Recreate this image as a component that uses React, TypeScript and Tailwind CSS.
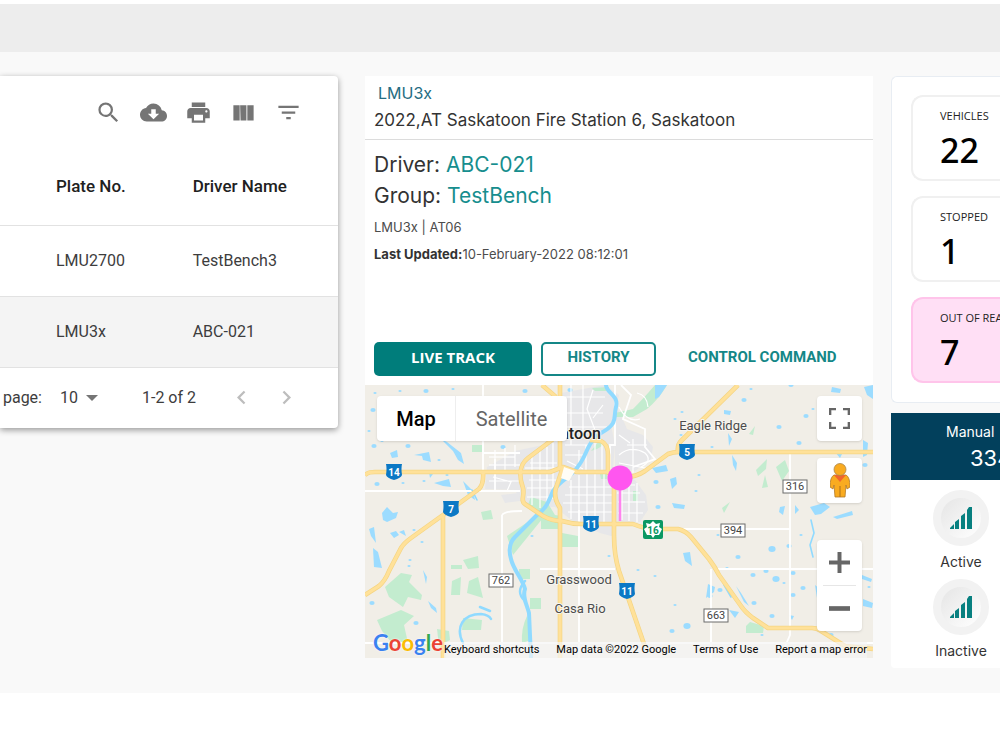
import React from "react";

const vehicles = [
  { plate: "LMU2700", driver: "TestBench3" },
  { plate: "LMU3x", driver: "ABC-021" }
];

const stats = [
  { label: "VEHICLES", value: "22", box: "border-[#f0f0f0] bg-white" },
  { label: "STOPPED", value: "1", box: "border-[#f0f0f0] bg-white" },
  { label: "OUT OF REACH", value: "7", box: "border-[#ffc4ea] bg-[#ffdff5]" }
];

const tools = [
  { name: "Search", d: "M15.5 14h-.79l-.28-.27A6.471 6.471 0 0 0 16 9.5 6.5 6.5 0 1 0 9.5 16c1.61 0 3.09-.59 4.23-1.57l.27.28v.79l5 4.99L20.49 19l-4.99-5zm-6 0C7.01 14 5 11.99 5 9.5S7.01 5 9.5 5 14 7.01 14 9.5 11.99 14 9.5 14z" },
  { name: "Download CSV", d: "M19.35 10.04C18.67 6.59 15.64 4 12 4 9.11 4 6.6 5.64 5.35 8.04 2.34 8.36 0 10.91 0 14c0 3.31 2.69 6 6 6h13c2.76 0 5-2.24 5-5 0-2.64-2.05-4.78-4.65-4.96zM17 13l-5 5-5-5h3V9h4v4h3z" },
  { name: "Print", d: "M19 8H5c-1.66 0-3 1.34-3 3v6h4v4h12v-4h4v-6c0-1.66-1.34-3-3-3zm-3 11H8v-5h8v5zm3-7c-.55 0-1-.45-1-1s.45-1 1-1 1 .45 1 1-.45 1-1 1zm-1-9H6v4h12V3z" },
  { name: "View Columns", d: "M9 5.5h5.6v13.5H9.4zM3 5.5h5.6v13.5H3zM15.4 5.5v13.5H21V5.5z" },
  { name: "Filter Table", d: "M10 18h4v-2h-4v2zM3 6v2h18V6H3zm3 7h12v-2H6v2z" }
];

const highways = [
  "M0 90C4 87 6 87 10 87H155L185 87L198 82L212 87H242C252 94 268 94 280 86L303 69Q308 67 314 67H508",
  "M373 0L316 56Q312 60 313 67",
  "M0 210L14 201Q20 196 24 186L36 163Q39 158 46 153L78 130L114 104Q119 99 118 87",
  "M78 130V273",
  "M177 0L191 12",
  "M195 0V82",
  "M191 52L163 73C154 80 154 92 158 103C160 110 155 116 160 119L178 131Q187 136 197 136Q207 139 216 139H268Q280 144 290 144H313Q321 146 326 152L344 174Q350 182 354 190L376 221Q380 227 388 233L403 243H447Q452 243 456 246L480 261L508 264",
  "M198 82L192 100Q187 111 195 123V273",
  "M225 55L236 56Q243 59 243 70V87",
  "M249 93V150Q249 170 254 186L280 262"
];

const minorRoads = [
  "M0 106H155", "M118 0V87", "M130 74V105", "M137 130Q140 126 157 126", "M137 130V273", "M175 184H250",
  "M214 125V273", "M290 144H425", "M425 67V250L415 273", "M350 184H508", "M346 184V273", "M0 258H508", "M118 68H155",
  "M250 0V60H245V90", "M256 0L266 10L258 34L280 44V62L290 74L268 82"
];

const streets = [
  "M124 72H150", "M124 80H155", "M130 65V85M140 63V85M150 60V82", "M124 96H155M128 92L146 97L142 106",
  "M160 83H195M165 78H192M164 95H195M162 103H190M162 112H186M167 70V120M175 66V123M182 62V122M188 58V114",
  "M200 12H240M200 28H238M200 42H242M200 60H225M206 0V60M218 0V52M228 5L222 24L230 45M238 20L228 33",
  "M200 70H220M202 76L218 84M214 65V84M221 60V85M230 58V87M237 59V87",
  "M204 102H247M200 110H247M198 118H247M203 127H247M206 95V134M214 90V136M222 88V137M230 88V138M239 88V138",
  "M252 100H270M252 108H275M253 117H280M253 128H278M257 94V135M264 95V136M272 98V137",
  "M254 70Q266 60 280 68Q288 76 276 82M262 60H282M254 78L285 84M268 54V88",
  "M254 22Q262 38 275 34M272 8Q282 10 283 22M254 50L265 58"
];

const urban = [
  "M150 66L178 60L190 45L196 8L240 0L254 10L246 40L250 60L248 84L270 95L281 110L283 125L275 137L210 138L190 122L158 121L150 105L120 104L122 82L140 72Z",
  "M250 84V20L256 30L262 44L278 50L288 62L286 74L270 86Z",
  "M136 110L154 108L155 116L140 118Z", "M216 140H250V152L235 148Z"
];

const parks = [
  "M250 28L268 24Q278 14 290 0L302 0Q294 14 282 24L268 32H250Z",
  "M107 60H117V67H107Z", "M226 66L234 56L242 58L232 64Z", "M166 112L182 117L190 130L197 131V144H176V128L162 122Z",
  "M142 151L176 128L178 133L148 170Z", "M197 148L213 151V162H197Z", "M116 127L126 125L128 134L118 135Z",
  "M154 184H165V194H154Z", "M165 213H176V224H165Z", "M20 202L36 188L47 190L44 197L57 210L56 215L43 212L38 222L24 212Z",
  "M12 235L36 225L49 231L39 240L43 258H27L17 246Z", "M86 180H97V184H86ZM87 196L96 192L95 210H86Z", "M98 175L113 171L114 183L103 184Z",
  "M104 196L113 192L118 213L102 208Z", "M98 233L117 235L116 245H97Z", "M72 244L84 246L85 255L74 261Z",
  "M157 258Q156 243 162 231L166 255Z", "M391 85L402 74L401 84L393 91ZM411 82L420 75L424 86L417 96ZM397 103L400 90L403 102Z",
  "M381 241L385 237L399 241L398 248H381Z", "M384 49L390 41L388 50ZM357 123L365 117L359 128Z",
  "M227 3L244 2L244 6H230ZM235 89H242V94H236ZM268 106H273V116H268Z"
];

const lakes = [
  "M25 68L32 65L33 72L27 73ZM76 54L82 57L96 68L99 79L93 75L88 66Z", "M49 70L64 67L66 77L58 75L57 71Z",
  "M17 128L22 122L28 128L33 127L31 133L22 137L18 135Z", "M4 144L9 142L11 158L6 151Z", "M8 163L13 167L17 183L9 182Z",
  "M25 148L31 146L34 150L29 153ZM34 147L39 145L41 151Z", "M58 185L62 192L61 199ZM63 216L71 223L72 228L66 223Z",
  "M98 96L108 106L110 115L103 110Z", "M69 98L84 94L86 102L78 101ZM64 87L68 89L65 93Z", "M305 94L311 92L312 99L307 104Z",
  "M287 83L301 80L303 86L291 88Z", "M367 70L372 78L371 86L368 80Z", "M359 25L366 26L365 30L359 29ZM363 48L367 54L364 61Z",
  "M307 118L320 120L319 124L309 123Z", "M318 168L325 167L327 181L320 176ZM343 199L350 202L349 207L341 213Z",
  "M415 122L420 121L418 130L414 127ZM430 120L434 125L430 129Z", "M445 122L459 118L465 122L456 129L450 130Z",
  "M468 132L487 126L488 130L472 134Z", "M497 190L507 194L506 197L497 194ZM498 214L508 218L507 223L498 221Z", "M364 225L374 227L370 233Z",
  "M424 230L429 231L427 235ZM467 2L476 4L475 8L466 7Z", "M499 2L508 0V14L502 10ZM498 55L503 58L502 70L498 72Z",
  "M470 67L477 69L475 73ZM450 200L455 204L452 213Z", "M371 201L376 208L384 221L379 217Z", "M290 0H302L294 12L290 14Z"
];

// small ponds: x, y, radius
const ponds = [
  [10, 8, 1], [22, 18, 2], [35, 6, 1], [44, 12, 1], [61, 6, 2], [75, 14, 1], [88, 4, 1], [160, 6, 2], [205, 5, 2],
  [8, 25, 2], [4, 46, 1], [9, 61, 2], [17, 56, 1], [43, 61, 2], [52, 54, 1], [74, 75, 1], [82, 90, 1], [12, 99, 2],
  [24, 106, 1], [38, 98, 1], [59, 96, 1], [57, 157, 1], [44, 181, 1], [45, 175, 1], [49, 145, 1], [7, 218, 2], [51, 238, 2],
  [138, 62, 2], [291, 97, 2], [310, 34, 1], [317, 27, 1], [379, 15, 2], [386, 4, 1], [414, 42, 2], [434, 58, 2],
  [441, 31, 2], [448, 24, 1], [426, 0, 2], [316, 50, 1], [347, 62, 1], [331, 106, 1], [334, 90, 1], [353, 150, 1],
  [407, 164, 3], [424, 161, 2], [373, 172, 2], [388, 190, 2], [401, 186, 2], [411, 194, 3], [419, 198, 1], [428, 188, 2],
  [438, 203, 2], [428, 210, 2], [290, 191, 1], [293, 122, 2], [273, 185, 1], [310, 220, 1], [322, 241, 3], [307, 246, 2],
  [407, 231, 2], [389, 218, 2], [466, 250, 2], [490, 206, 2], [504, 202, 1], [436, 150, 1], [430, 105, 2], [500, 80, 2],
  [244, 171, 1], [167, 151, 1], [355, 205, 2], [345, 211, 2], [397, 250, 1], [455, 222, 2], [362, 183, 1]
];

const shields = [
  { x: 29, y: 87, n: "14" },
  { x: 86, y: 124, n: "7" },
  { x: 322, y: 67, n: "5" },
  { x: 226, y: 139, n: "11" },
  { x: 262, y: 206, n: "11" }
];

const routes = [
  { x: 430, y: 101, n: "316" },
  { x: 368, y: 145, n: "394" },
  { x: 136, y: 195, n: "762" },
  { x: 351, y: 230, n: "663" }
];

const places = [
  { x: 348, y: 45, name: "Eagle Ridge" },
  { x: 214, y: 199, name: "Grasswood" },
  { x: 215, y: 228, name: "Casa Rio" }
];

function RoadMap() {
  return (
    <svg viewBox="0 0 508 273" preserveAspectRatio="xMidYMid slice" className="block h-full w-full font-[Roboto,sans-serif]">
      <rect width="508" height="273" fill="#f1eee7" />
      {urban.map((d) => <path key={d} d={d} fill="#e7e7e9" />)}
      {parks.map((d) => <path key={d} d={d} fill="#c3eccf" />)}
      <g fill="#9cdcff">
        {lakes.map((d) => <path key={d} d={d} />)}
        {ponds.map(([x, y, r]) => <ellipse key={`${x}-${y}`} cx={x} cy={y} rx={r + 0.6} ry={r} />)}
      </g>
      <g fill="none" stroke="#ffffff">
        {streets.map((d) => <path key={d} d={d} strokeWidth="1.2" />)}
        {minorRoads.map((d) => <path key={d} d={d} strokeWidth="1.8" />)}
      </g>
      <g fill="none" stroke="#90daff" strokeLinecap="round" strokeLinejoin="round">
        <path d="M241 0C241 8 254 10 251 22C248 33 254 38 236 48C222 57 222 70 214 80C207 92 196 94 188 106C184 116 181 124 172 130L150 152Q142 160 146 174C148 184 158 195 160 204C157 212 162 220 164 228L166 273" strokeWidth="4" />
        <path d="M160 196Q150 207 160 216M98 258C90 242 98 229 116 229Q124 230 126 234M115 222L125 226" strokeWidth="2.5" />
        <path d="M446 135L449 148L445 160L448 172M107 105L112 115M359 200L366 212" strokeWidth="1.6" />
      </g>
      <g fill="none" strokeLinejoin="round">
        {highways.map((d) => <path key={d} d={d} stroke="#f5d583" strokeWidth="4.6" />)}
        {highways.map((d) => <path key={d} d={d} stroke="#ffe199" strokeWidth="3.2" />)}
      </g>
      <path d="M199 82L210 86L204 96L196 93Z" fill="#fffdf6" />

      {shields.map((s) => (
        <g key={`${s.x}-${s.y}`}>
          <path d={`M${s.x - 8} ${s.y - 8}H${s.x + 8}Q${s.x + 7} ${s.y - 4} ${s.x + 8} ${s.y + 3}Q${s.x + 7} ${s.y + 6} ${s.x} ${s.y + 8}Q${s.x - 7} ${s.y + 6} ${s.x - 8} ${s.y + 3}Q${s.x - 7} ${s.y - 4} ${s.x - 8} ${s.y - 8}Z`} fill="#0b78c5" />
          <text x={s.x} y={s.y + 4} textAnchor="middle" fontSize="10" fontWeight="700" fill="#fff">{s.n}</text>
        </g>
      ))}
      <rect x="278" y="135" width="20" height="19" rx="2" fill="#0b9863" />
      <path d="M288 136L291 139L295 138L294 142L297 144L294 150H290L288 153L286 150H282L279 144L282 142L281 138L285 139Z" fill="#fff" />
      <text x="288" y="149" textAnchor="middle" fontSize="10" fontWeight="700" fill="#0b9863">16</text>
      {routes.map((r) => (
        <g key={r.n}>
          <rect x={r.x - 12} y={r.y - 6} width="24" height="13" fill="#fff" stroke="#6b6b6b" />
          <text x={r.x} y={r.y + 4} textAnchor="middle" fontSize="11" fill="#444">{r.n}</text>
        </g>
      ))}
      <g fill="#4c4c4c" stroke="#f7f5f0" strokeWidth="2" paintOrder="stroke" textAnchor="middle" fontSize="13">
        {places.map((p) => <text key={p.name} x={p.x} y={p.y}>{p.name}</text>)}
        <text x="236" y="54" textAnchor="end" fontSize="16" fontWeight="500" fill="#222">Saskatoon</text>
      </g>
      <path d="M255 93V136" stroke="#ff83ee" strokeWidth="2.5" />
      <circle cx="255" cy="93" r="12.5" fill="#ff56ef" />
    </svg>
  );
}

function VehicleTable() {
  return (
    <section className="overflow-hidden rounded-r bg-white font-[Roboto,sans-serif] text-base text-[#3d3d3d] shadow-[0_2px_6px_rgba(0,0,0,0.4)]">
      <div className="flex h-[72px] items-center justify-end gap-[18px] pr-9">
        {tools.map((t) => (
          <button key={t.name} type="button" aria-label={t.name} className="text-[#757575]">
            <svg viewBox="0 0 24 24" className="h-[27px] w-[27px] fill-current"><path d={t.d} /></svg>
          </button>
        ))}
      </div>
      <table className="w-full table-fixed border-collapse text-left">
        <thead>
          <tr className="h-[77px] border-b border-[#e2e2e2] text-[17px] text-[#212121]">
            <th className="w-[57%] pl-14 font-medium">Plate No.</th>
            <th className="font-medium">Driver Name</th>
          </tr>
        </thead>
        <tbody>
          {vehicles.map((v) => (
            <tr key={v.plate} className="h-[71px] border-b border-[#e2e2e2] even:bg-[#f4f4f4]">
              <td className="pl-14">{v.plate}</td>
              <td>{v.driver}</td>
            </tr>
          ))}
        </tbody>
      </table>
      <div className="flex h-[60px] items-center justify-end pr-[38px]">
        <label htmlFor="rows">page:</label>
        <div className="relative ml-[18px] mr-9">
          <select id="rows" defaultValue="10" className="w-[46px] appearance-none bg-transparent">
            <option>10</option>
            <option>15</option>
            <option>100</option>
          </select>
          <svg viewBox="0 0 12 6" className="pointer-events-none absolute right-2 top-1/2 h-[6px] w-3 -translate-y-1/2 fill-[#757575]"><path d="M0 0h12L6 6z" /></svg>
        </div>
        <span>1-2 of 2</span>
        <button type="button" aria-label="Previous Page" className="ml-8 text-[#bdbdbd]">
          <svg viewBox="0 0 24 24" className="h-[27px] w-[27px] fill-current"><path d="M15.41 7.41 14 6l-6 6 6 6 1.41-1.41L10.83 12z" /></svg>
        </button>
        <button type="button" aria-label="Next Page" className="ml-[18px] text-[#bdbdbd]">
          <svg viewBox="0 0 24 24" className="h-[27px] w-[27px] fill-current"><path d="M10 6 8.59 7.41 13.17 12l-4.58 4.59L10 18l6-6z" /></svg>
        </button>
      </div>
    </section>
  );
}

function VehicleDetail() {
  return (
    <section className="bg-white font-[Inter,sans-serif] text-[#333]">
      <header className="border-b border-[#dcdcdc] px-[9px] pb-[5px] pt-1 text-[17px] leading-[27px]">
        <h2 className="pl-1 text-base leading-[27px] text-[#256d82]">LMU3x</h2>
        <p className="whitespace-nowrap">2022,AT Saskatoon Fire Station 6, Saskatoon</p>
      </header>
      <div className="h-[202px] px-[9px] pt-[9px]">
        <p className="text-[21px] leading-[31px]">Driver: <span className="text-[#168e8e]">ABC-021</span></p>
        <p className="text-[21px] leading-[31px]">Group: <span className="text-[#168e8e]">TestBench</span></p>
        <p className="mt-[3px] text-[13px] leading-[27px] text-[#4c4c4c]">LMU3x | AT06</p>
        <p className="text-[13px] leading-[27px] text-[#4c4c4c]"><b className="font-bold text-[#333]">Last Updated:</b>10-February-2022 08:12:01</p>
      </div>
      <div className="flex items-center gap-[9px] px-[9px] pb-[9px] font-[Roboto,sans-serif] text-[15px] font-bold text-[#148787]">
        <button type="button" className="h-[34px] w-[158px] rounded-[5px] bg-[#007d7b] pb-1 font-['Open_Sans',sans-serif] text-[15px] font-bold text-white">LIVE TRACK</button>
        <button type="button" className="h-[34px] w-[115px] rounded-[5px] border-2 border-[#148787] pb-1">HISTORY</button>
        <button type="button" className="h-[34px] px-[23px] pb-1">CONTROL COMMAND</button>
      </div>
      <div className="relative h-[273px] overflow-hidden font-[Roboto,sans-serif]">
        <RoadMap />
        <div className="absolute left-3 top-[11px] flex h-[45px] rounded-sm bg-white text-xl shadow">
          <button type="button" className="w-[79px] border-r border-[#eee] font-medium text-black">Map</button>
          <button type="button" className="w-[111px] text-[#666]">Satellite</button>
        </div>
        <div className="absolute right-[11px] top-[11px] flex flex-col">
          <button type="button" aria-label="Toggle fullscreen view" className="flex h-[45px] w-[45px] items-center justify-center rounded-sm bg-white shadow">
            <svg viewBox="0 0 18 18" className="h-[21px] w-[21px] fill-[#666]"><path d="M0 0v6h2V2h4V0H0zm16 0h-4v2h4v4h2V0h-2zm0 16h-4v2h6v-6h-2v4zM2 12H0v6h6v-2H2v-4z" /></svg>
          </button>
          <button type="button" aria-label="Show street view" className="mt-[17px] flex h-[45px] w-[45px] items-center justify-center rounded-sm bg-white shadow">
            <svg viewBox="0 0 20 35" className="h-[35px] w-5">
              <path d="M4 12Q0 14 0 24L3 26L4 22L5 34H15L16 22L17 26L20 24Q20 14 16 12Z" fill="#f9ab20" stroke="#b17a2a" strokeWidth="0.8" />
              <path d="M10 23V34" stroke="#b8791c" strokeWidth="1.2" />
              <path d="M4 12H16L10 19Z" fill="#f0652f" />
              <circle cx="10" cy="6.500" r="6" fill="#f9ab20" stroke="#a8854d" strokeWidth="0.8" />
            </svg>
          </button>
          <div className="mt-[37px] flex w-[45px] flex-col items-center rounded-sm bg-white shadow">
            <button type="button" aria-label="Zoom in" className="flex h-[45px] w-[45px] items-center justify-center">
              <svg viewBox="0 0 18 18" className="h-[21px] w-[21px] fill-[#666]"><path d="M18 7.300h-7.300V0H7.300v7.300H0v3.400h7.300V18h3.400v-7.300H18z" /></svg>
            </button>
            <hr className="w-[33px] border-[#e6e6e6]" />
            <button type="button" aria-label="Zoom out" className="flex h-[45px] w-[45px] items-center justify-center">
              <svg viewBox="0 0 18 18" className="h-[21px] w-[21px] fill-[#666]"><path d="M0 7h18v4H0z" /></svg>
            </button>
          </div>
        </div>
        <div className="absolute inset-x-0 bottom-0 flex items-end pr-[6px]">
          <a href="#google" aria-label="Google" className="ml-2 w-[71px] font-[Lato,sans-serif] text-[22px] font-bold leading-[30px] [text-shadow:0_0_2px_#fff]">
            <span className="text-[#3b82f0]">G</span><span className="text-[#ea4335]">o</span><span className="text-[#fbbc05]">o</span><span className="text-[#3b82f0]">g</span><span className="text-[#34a853]">l</span><span className="text-[#ea4335]">e</span>
          </a>
          <div className="flex h-4 flex-1 items-center justify-between whitespace-nowrap bg-[#f5f5f5]/70 text-[11px] text-black">
            <button type="button">Keyboard shortcuts</button>
            <span>Map data ©2022 Google</span>
            <a href="#terms">Terms of Use</a>
            <a href="#report">Report a map error</a>
          </div>
        </div>
      </div>
    </section>
  );
}

function Signal({ label }: { label: string }) {
  return (
    <div className="flex flex-col items-center">
      <div className="flex h-14 w-14 items-center justify-center rounded-full border-8 border-[#f2f2f2] bg-linear-to-br from-[#e5e5e5] to-white">
        <svg viewBox="0 0 22 22" className="h-[22px] w-[22px] fill-[#088080]">
          <path d="M0 22v-1l4-4v5zM5 22v-7l4-3v10zM11 22V9l4-3v16zM17 22V3l2-3h3v22z" />
        </svg>
      </div>
      <p className="pb-[2px] text-sm leading-[31px]">{label}</p>
    </div>
  );
}

function FleetSummary() {
  return (
    <aside className="overflow-hidden">
      <div className="rounded-l-md border border-r-0 border-[#e8edf3] bg-white pb-[19px] pl-[19px] pt-[18px] font-['Open_Sans',sans-serif]">
        <div className="flex flex-col gap-[15px]">
          {stats.map((s) => (
            <div key={s.label} className={`h-[86px] whitespace-nowrap rounded-l-xl border-2 border-r-0 pl-[27px] pt-[10px] text-black ${s.box}`}>
              <p className="text-[11px] leading-[18px] text-[#222]">{s.label}</p>
              <p className="font-['Noto_Sans',sans-serif] text-[34px] font-medium leading-[50px]">{s.value}</p>
            </div>
          ))}
        </div>
      </div>
      <div className="mt-[10px] h-[67px] bg-[#02405c] pt-[6px] font-[Inter,sans-serif] text-white">
        <p className="pl-[55px] text-sm leading-[25px]">Manual</p>
        <p className="pl-[79px] text-[22px] leading-[28px]">334</p>
      </div>
      <div className="flex flex-col items-start rounded-bl bg-white pl-[42px] pt-[10px] font-[Inter,sans-serif] text-[#333]">
        <Signal label="Active" />
        <Signal label="Inactive" />
      </div>
    </aside>
  );
}

export default function App() {
  return (
    <div className="min-h-screen overflow-x-hidden bg-white pt-1">
      <div className="h-12 bg-[#ededed]" />
      <main className="grid grid-cols-[minmax(0,347fr)_minmax(0,508fr)_minmax(0,109fr)] items-start gap-[18px] bg-[#f9f9f9] pb-[25px] pt-6">
        <div className="pr-[9px]">
          <VehicleTable />
        </div>
        <VehicleDetail />
        <FleetSummary />
      </main>
    </div>
  );
}
